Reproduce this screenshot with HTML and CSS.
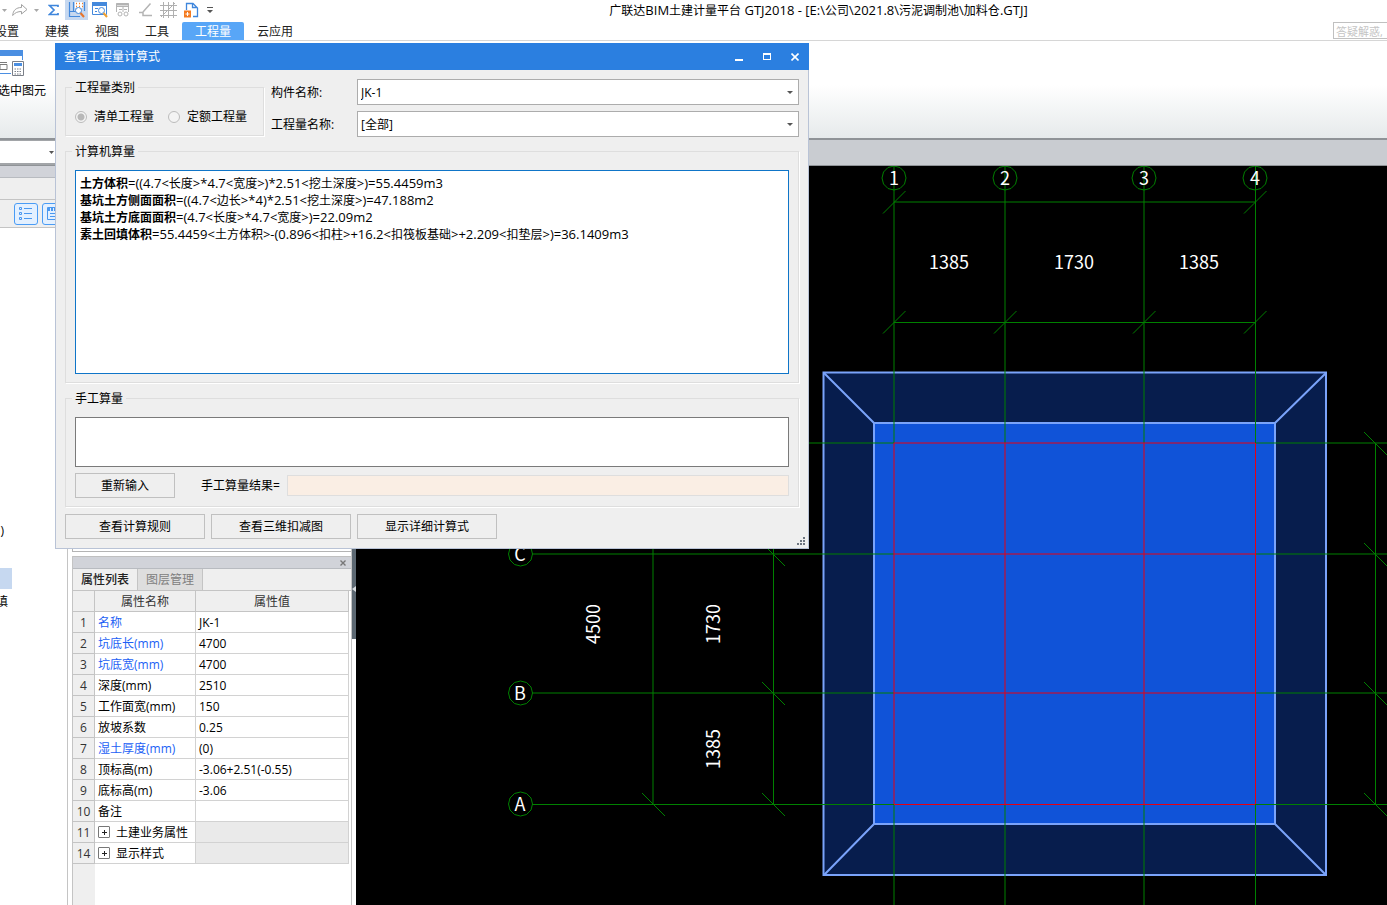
FILE: index.html
```html
<!DOCTYPE html>
<html lang="zh-CN">
<head>
<meta charset="utf-8">
<title>广联达BIM土建计量平台 GTJ2018</title>
<link rel="stylesheet" href="styles.css">
</head>
<body>
<div class="app">
  <header class="topbar">
    <div class="quick">
      <button class="q q-first" aria-label="撤销选项"><svg width="5" height="3"><path d="M0 0h5L2.5 3z" fill="#a8a8a8"/></svg></button>
      <button class="q" aria-label="恢复"><svg width="16" height="14" fill="none" stroke="#a2a2a2"><path d="M.7 12.5C1 7.500 4 4.500 9.500 4.500V1.500L15 6.500 9.500 11V8.500C6 8.500 3 9.500.7 12.500z"/></svg></button>
      <button class="q q-caret" aria-label="恢复选项"><svg width="5" height="3"><path d="M0 0h5L2.500 3z" fill="#a8a8a8"/></svg></button>
      <button class="q" aria-label="汇总计算"><svg width="12" height="12" fill="none" stroke="#3f86dc" stroke-width="1.700"><path d="M10 3V1.500H1.500L6 6 1.500 10.500H10V9"/></svg></button>
      <button class="q q-on" aria-label="查看计算式"><svg width="18" height="16" fill="none" stroke="#4489dc"><path d="M1.500 0v14.500H12M5.500 0v9.500H1.500M5.500 9.500h3M16.500 0v9" stroke-width="1.200"/><path d="M7 0h8v6H7z" fill="#fff" stroke="none"/><path d="M8 1.500h1M11 1.500h1M14 1.500h1M8 4.500h1M11 4.500h1M14 4.500h1" stroke="#f07c28" stroke-width="1.500"/><circle cx="10.500" cy="8.500" r="3" fill="#fff"/><path d="M12.500 11l3.500 4" stroke="#e8742a" stroke-width="2"/></svg></button>
      <button class="q" aria-label="查看工程量"><svg width="16" height="16" fill="none" stroke="#4489dc"><path d="M.5.500h14v12H.5z" fill="#fff"/><path d="M0 2h15" stroke-width="4"/><path d="M3 6.500h3M3 9.500h2"/><circle cx="9.500" cy="8.500" r="3" fill="#fff"/><path d="M11.500 11l3.500 4" stroke="#f0a030" stroke-width="2"/></svg></button>
      <button class="q" aria-label="查看报表"><svg width="16" height="16" fill="none" stroke="#b4b4b4"><path d="M1.500 10V1.500h12V10M1.500 4.500h12M8 5v5M9 7.500h3M4 7.500h3"/><path d="M1 2.500h13" stroke-width="2"/><circle cx="5" cy="12" r="2"/><circle cx="11" cy="12" r="2"/></svg></button>
      <button class="q" aria-label="编辑"><svg width="16" height="14" fill="none" stroke="#b4b4b4"><path d="M12.500.500L5 9M1 9.500h4v3H14" stroke-width="1.500"/></svg></button>
      <button class="q" aria-label="轴网"><svg width="17" height="16" fill="none" stroke="#b0b0b0"><path d="M0 3.500h17M0 8.500h17M0 13.500h17M3.500 0v16M8.500 0v16M13.500 0v16M1 15L15 1"/></svg></button>
      <button class="q" aria-label="导出"><svg width="15" height="16" fill="none" stroke="#3f86dc"><path d="M2.500 8V1.500H9L13.500 6v8.500H9M8.500 1.500v4H13" stroke-width="1.300"/><path d="M0 8.500h7v7H0z" fill="#f47b20" stroke="none"/><path d="M3.500 10v4M1.500 12h4" stroke="#fff"/></svg></button>
      <button class="q q-end" aria-label="自定义"><svg width="6" height="6"><path d="M0 0h6v1H0zM0 3h6L3 6z" fill="#555"/></svg></button>
    </div>
    <h1 class="title"><span>广联达</span>BIM<span>土建计量平台</span> GTJ2018 - [E:\<span>公司</span>\2021.8\<span>污泥调制池</span>\<span>加料仓</span>.GTJ]</h1>
  </header>
  <nav class="menubar">
    <div class="tabs">
      <a href="#">设置</a><a href="#">建模</a><a href="#">视图</a><a href="#">工具</a><a href="#" class="active">工程量</a><a href="#">云应用</a>
    </div>
    <input class="search" type="text" aria-label="搜索" placeholder="答疑解惑,">
  </nav>
  <section class="ribbon">
    <button class="ribbon-btn">
      <svg width="26" height="26" fill="none"><path d="M0 0h25v6H0z" fill="#4b8fe2"/><path d="M24.500 5v5M0 23.500h13" stroke="#4b8fe2"/><path d="M0 12.500h9M0 19.500h9M2 14.500h7v5H2z" stroke="#7a7a7a"/><path d="M14.500 11.500h11v14h-11z" fill="#fff" stroke="#7a7f88"/><path d="M16 13h8v3h-8z" fill="#4b8fe2"/><path d="M16.500 19h7M16.500 21.500h7M16.500 24h7" stroke="#7a7f88" stroke-dasharray="1.500 1"/></svg>
      <span>选中图元</span>
    </button>
  </section>
  <div class="strip"><button class="floor" aria-label="楼层"><svg width="5" height="3"><path d="M0 0h5L2.500 3z" fill="#555"/></svg></button></div>

  <main class="work">
    <aside class="side">
      <div class="band"></div>
      <div class="bar"></div>
      <div class="bar bar-tools">
        <button class="tool" aria-label="列表"><svg width="14" height="14" fill="none" stroke="#4a98f0"><path d="M.5.500h2v2h-2zM.5 5.500h2v2h-2zM.5 10.500h2v2h-2zM5 1.500h8M5 6.500h8M5 11.500h8"/></svg></button>
        <button class="tool" aria-label="详情"><svg width="14" height="14" fill="none" stroke="#4a98f0"><path d="M.5.500h13v12H.5zM3 6.500h8M3 9.500h8"/><path d="M1 2.500h12" stroke-width="3" stroke-dasharray="2 1"/></svg></button>
      </div>
      <div class="side-body">
        <ul class="tree">
          <li class="tail">)</li><li></li><li class="sel"></li><li>填</li>
        </ul>
        <div class="panels">
          <div class="list"></div>
          <section class="props">
            <div class="band band-close"><button class="x" aria-label="关闭"><svg width="6" height="6" stroke="#777" stroke-width="1.400"><path d="M.5.500l5 5M5.500.500l-5 5"/></svg></button></div>
            <div class="ptabs"><button class="on">属性列表</button><button>图层管理</button></div>
            <div class="sheet">
              <table>
                <colgroup><col class="c-num"><col class="c-name"><col></colgroup>
                <thead><tr><th></th><th>属性名称</th><th>属性值</th></tr></thead>
                <tbody>
                  <tr><th>1</th><td class="key">名称</td><td>JK-1</td></tr>
                  <tr><th>2</th><td class="key">坑底长(mm)</td><td>4700</td></tr>
                  <tr><th>3</th><td class="key">坑底宽(mm)</td><td>4700</td></tr>
                  <tr><th>4</th><td>深度(mm)</td><td>2510</td></tr>
                  <tr><th>5</th><td>工作面宽(mm)</td><td>150</td></tr>
                  <tr><th>6</th><td>放坡系数</td><td>0.25</td></tr>
                  <tr><th>7</th><td class="key">湿土厚度(mm)</td><td>(0)</td></tr>
                  <tr><th>8</th><td>顶标高(m)</td><td>-3.06+2.51(-0.55)</td></tr>
                  <tr><th>9</th><td>底标高(m)</td><td>-3.06</td></tr>
                  <tr><th>10</th><td>备注</td><td></td></tr>
                  <tr><th>11</th><td><span class="fold"><button class="plus" aria-label="展开"><svg width="5" height="5" stroke="#222"><path d="M0 2.500h5M2.500 0v5"/></svg></button>土建业务属性</span></td><td class="off"></td></tr>
                  <tr><th>14</th><td><span class="fold"><button class="plus" aria-label="展开"><svg width="5" height="5" stroke="#222"><path d="M0 2.500h5M2.500 0v5"/></svg></button>显示样式</span></td><td class="off"></td></tr>
                </tbody>
              </table>
            </div>
          </section>
        </div>
        <div class="splitter"><button class="grip" aria-label="折叠"><svg width="4" height="6"><path d="M4 0v6L0 3z" fill="#d8dce0"/></svg></button></div>
      </div>
    </aside>
    <section class="canvas">
      <svg class="drawing" width="100%" height="100%">
        <defs>
          <path id="bubble" d="M0-12L6-10.500 10.500-6 12 0 10.500 6 6 10.500 0 12-6 10.500-10.500 6-12 0-10.500-6-6-10.500z"/>
          <path id="up" d="M-11 11.500L11.500-11"/>
          <path id="dn" d="M-11-11L12 12"/>
        </defs>
        <g transform="translate(-356 -166)">
          <path d="M823.500 372.500h502.500v502.500H823.500z" fill="#071d4d" stroke="#7aa3fa" stroke-width="2"/>
          <path d="M874 423h401v401H874z" fill="#1053d8" stroke="#7aa3fa" stroke-width="2"/>
          <path d="M824 373l50 50M1326 373l-51 50M824 875l50-51M1326 875l-51-51" stroke="#7aa3fa" stroke-width="2"/>
          <g stroke="#008000" fill="none">
            <path d="M894 166v277M1005 166v277M1144 166v277M1255.500 166v277M894 804v110M1005 804v110M1144 804v110M1255.500 804v110"/>
            <path d="M532 443h362M532 554h362M532 693h362M532 804.500h362M1255 443h1400M1255 554h1400M1255 693h1400M1255 804.500h1400"/>
            <path d="M894 202h361M894 322.500h361M653 443v361M773.500 443v361M1375.500 443v361"/>
            <use href="#bubble" x="894" y="178"/><use href="#bubble" x="1005" y="178"/><use href="#bubble" x="1144" y="178"/><use href="#bubble" x="1255" y="178"/>
            <use href="#bubble" x="520.500" y="554"/><use href="#bubble" x="520.500" y="693"/><use href="#bubble" x="520.500" y="804"/>
            <use href="#up" x="894" y="202"/><use href="#up" x="1255" y="202"/>
            <use href="#up" x="894" y="322"/><use href="#up" x="1005" y="322"/><use href="#up" x="1144" y="322"/><use href="#up" x="1255" y="322"/>
            <use href="#dn" x="653" y="804"/><use href="#dn" x="773" y="804"/><use href="#dn" x="773" y="693"/><use href="#dn" x="773" y="554"/>
            <use href="#dn" x="1375" y="443"/><use href="#dn" x="1375" y="554"/><use href="#dn" x="1375" y="693"/><use href="#dn" x="1375" y="804"/>
          </g>
          <path d="M894 443v361M1005 443v361M1144 443v361M1255.500 443v361M894 443h361M894 554h361M894 693h361M894 804.500h361" stroke="#e80010"/>
          <g class="dims">
            <text x="894" y="185">1</text><text x="1005" y="185">2</text><text x="1144" y="185">3</text><text x="1255" y="185">4</text>
            <text x="520" y="561">C</text><text x="520" y="700">B</text><text x="520" y="811">A</text>
            <text x="949" y="269">1385</text><text x="1074" y="269">1730</text><text x="1199" y="269">1385</text>
            <text transform="translate(600 624) rotate(-90)">4500</text>
            <text transform="translate(720 624) rotate(-90)">1730</text>
            <text transform="translate(720 749) rotate(-90)">1385</text>
          </g>
        </g>
      </svg>
    </section>
  </main>
</div>

<div class="dialog" role="dialog" aria-labelledby="dlg-title">
  <div class="dlg-head">
    <h2 id="dlg-title">查看工程量计算式</h2>
    <button aria-label="最小化"><svg width="8" height="8"><path d="M0 6h8v2H0z" fill="#fff"/></svg></button>
    <button aria-label="最大化"><svg width="8" height="8"><path d="M0 0h8v7H0zM1 2v4h6V2z" fill="#fff" fill-rule="evenodd"/></svg></button>
    <button aria-label="关闭"><svg width="8" height="8" stroke="#fff" stroke-width="1.600"><path d="M.5.500l7 7M7.500.500l-7 7"/></svg></button>
  </div>
  <div class="dlg-body">
    <div class="query">
      <fieldset class="kind">
        <legend>工程量类别</legend>
        <label><input type="radio" name="kind" checked disabled>清单工程量</label>
        <label><input type="radio" name="kind" disabled>定额工程量</label>
      </fieldset>
      <div class="fields">
        <label for="comp">构件名称:</label>
        <span class="pick"><select id="comp"><option>JK-1</option></select></span>
        <label for="qty">工程量名称:</label>
        <span class="pick"><select id="qty"><option>[全部]</option></select></span>
      </div>
    </div>
    <fieldset>
      <legend>计算机算量</legend>
      <div class="formula" role="textbox" aria-label="计算机算量" aria-multiline="true" tabindex="0">
        <p><b>土方体积</b>=((4.7&lt;<var>长度</var>&gt;*4.7&lt;<var>宽度</var>&gt;)*2.51&lt;<var>挖土深度</var>&gt;)=55.4459m3</p>
        <p><b>基坑土方侧面面积</b>=((4.7&lt;<var>边长</var>&gt;*4)*2.51&lt;<var>挖土深度</var>&gt;)=47.188m2</p>
        <p><b>基坑土方底面面积</b>=(4.7&lt;<var>长度</var>&gt;*4.7&lt;<var>宽度</var>&gt;)=22.09m2</p>
        <p><b>素土回填体积</b>=55.4459&lt;<var>土方体积</var>&gt;-(0.896&lt;<var>扣柱</var>&gt;+16.2&lt;<var>扣筏板基础</var>&gt;+2.209&lt;<var>扣垫层</var>&gt;)=36.1409m3</p>
      </div>
    </fieldset>
    <fieldset>
      <legend>手工算量</legend>
      <textarea class="manual" aria-label="手工算量"></textarea>
      <div class="result">
        <button class="btn">重新输入</button>
        <label for="res">手工算量结果=</label>
        <input id="res" type="text" readonly>
      </div>
    </fieldset>
    <div class="actions">
      <button class="btn">查看计算规则</button>
      <button class="btn">查看三维扣减图</button>
      <button class="btn">显示详细计算式</button>
    </div>
  </div>
  <svg class="resize" width="8" height="8" fill="#6e7680"><path d="M6 0h2v2H6zM3 3h2v2H3zM6 3h2v2H6zM0 6h2v2H0zM3 6h2v2H3zM6 6h2v2H6z"/></svg>
</div>
</body>
</html>
```
FILE: styles.css
```css
* { box-sizing: border-box; }
body, h1, h2, p, ul { margin: 0; padding: 0; }
body, button, input, select, textarea {
  font-family: "Open Sans", "Noto Sans CJK SC", sans-serif;
  font-size: 12px;
  line-height: 16px;
  color: #000;
}
body { background: #fff; overflow: hidden; }
button { border: 0; padding: 0; background: none; }
svg { display: block; }
h1, h2 { font-size: 12px; font-weight: 400; }

.app { display: flex; flex-direction: column; height: 100vh; }
.topbar { display: flex; align-items: center; height: 20px; }
.quick { display: flex; height: 20px; }
.q { display: flex; align-items: center; justify-content: center; width: 23px; }
.q-first { width: 8px; }
.q-caret { width: 11px; }
.q-end { width: 13px; }
.q-on { background: #c6d8f0; }
.title { flex: 1; padding-left: 34px; font-size: 13px; text-align: center; line-height: 20px; white-space: nowrap; }
.title span { font-size: 12px; }

.menubar { display: flex; justify-content: space-between; height: 21px; border-bottom: 1px solid #d6d6d6; padding-top: 2px; }
.tabs { display: flex; margin-left: -18px; }
.tabs a { padding: 0 13px; line-height: 20px; height: 18px; color: #222; text-decoration: none; }
.tabs .active { background: #58a6f7; color: #fff; border-radius: 2px 2px 0 0; }
.search { width: 54px; height: 17px; padding: 1px 2px 0; border: 1px solid #c0c0c0; border-right: 0; font-size: 11px; }
.search::placeholder { color: #c4c4c4; }

.ribbon { height: 97px; padding-top: 9px; background: linear-gradient(#fff 45%, #e6eaeb); overflow: hidden; }
.ribbon-btn { display: flex; flex-direction: column; gap: 7px; margin-left: -2px; white-space: nowrap; }
.strip { display: flex; height: 28px; border-top: 2px solid #8f9397; border-bottom: 1px solid #8f9397; background: #c9ccd1; }
.floor { display: flex; align-items: center; justify-content: flex-end; width: 56px; padding-right: 2px; background: #fff; border: 1px solid #a2a5a8; border-width: 1px 0 2px; }

.work { display: flex; flex: 1; min-height: 0; }
.side { display: flex; flex-direction: column; width: 356px; background: #fff; }
.band { height: 12px; background: #d1d3d9; border-bottom: 1px solid #b8bbc0; }
.bar { height: 22px; background: #efefef; border-bottom: 1px solid #c4c4c4; }
.bar-tools { display: flex; gap: 4px; height: 28px; padding: 3px 0 0 14px; }
.tool { display: flex; align-items: center; justify-content: center; width: 24px; height: 22px; border: 1px solid #4a9cf5; border-radius: 3px; background: #e3f0ff; }
.side-body { display: flex; flex: 1; min-height: 0; }
.tree { width: 68px; padding-top: 291px; list-style: none; border-right: 1px solid #c4c4c4; }
.tree li { display: flex; justify-content: flex-end; align-items: center; width: 12px; height: 26px; padding-right: 4px; }
.tree .tail { height: 24px; padding-right: 8px; }
.tree li:nth-child(2) { height: 25px; }
.tree .sel { height: 21px; background: #c6d8f0; }
.panels { display: flex; flex-direction: column; flex: 1; padding-left: 4px; border-right: 1px solid #c4c4c4; }
.list { height: 324px; margin-bottom: 4px; border: 1px solid #b4b4b4; border-right: 0; }
.props { display: flex; flex-direction: column; flex: 1; min-height: 0; border-left: 1px solid #c4c4c4; }
.band-close { display: flex; align-items: center; justify-content: flex-end; height: 13px; padding-right: 5px; border-top: 1px solid #c0c0c0; }
.ptabs { display: flex; height: 22px; background: #efefef; border-bottom: 1px solid #c4c4c4; }
.ptabs button { width: 65px; color: #808080; background: #dedede; border-right: 1px solid #c4c4c4; }
.ptabs .on { color: #222; background: #efefef; font-weight: 500; }
.sheet { flex: 1; background: linear-gradient(90deg, #efefef 22px, #fff 22px); }
table { width: 276px; table-layout: fixed; border-collapse: separate; border-spacing: 0; }
.c-num { width: 22px; }
.c-name { width: 101px; }
th, td { height: 21px; padding: 2px 0 0; border-right: 1px solid #d2d2d2; border-bottom: 1px solid #d2d2d2; font-weight: 400; white-space: nowrap; }
th { background: #efefef; color: #333; text-align: center; border-color: #c4c4c4; }
td { padding-left: 3px; background: #fff; }
.key { color: #1c5ff5; }
.off { background: #eaeaea; }
.fold { display: flex; align-items: center; gap: 6px; }
.plus { display: flex; align-items: center; justify-content: center; width: 12px; height: 12px; margin-bottom: 2px; border: 1px solid #777; border-radius: 1px; }
.splitter { width: 4px; }
.grip { display: flex; align-items: center; width: 4px; height: 411px; padding-top: 310px; background: #5c6872; }

.canvas { flex: 1; min-width: 0; background: #000; overflow: hidden; }
.dims { font: 18px "Noto Sans CJK SC", sans-serif; fill: #fff; text-anchor: middle; }

.dialog { position: absolute; left: 55px; top: 43px; width: 754px; background: #efefef; border: 1px solid #b9c3d6; border-top: 0; }
.dlg-head { display: flex; align-items: center; height: 27px; margin: 0 -1px; padding: 0 4px 0 9px; background: #2b7fe0; }
.dlg-head h2 { flex: 1; color: #fff; }
.dlg-head button { display: flex; align-items: center; justify-content: center; width: 28px; height: 27px; }
.dlg-head button:last-child { width: 20px; margin-left: 4px; }
.dlg-body { display: flex; flex-direction: column; gap: 7px; padding: 9px; }
.query { display: flex; gap: 7px; height: 57px; }
fieldset { min-width: 0; margin: 0; padding: 11px 9px 8px; border: 1px solid #dedede; box-shadow: 1px 1px 0 #fff; }
legend { height: 16px; margin-left: -3px; padding: 0 3px; line-height: 18px; }
.kind { display: flex; gap: 14px; width: 199px; padding: 13px 9px 0; }
.kind label { display: flex; gap: 7px; height: 18px; align-items: center; white-space: nowrap; }
.kind input { appearance: none; width: 12px; height: 12px; margin: 0; border: 1px solid #bcbcbc; border-radius: 50%; background: #f4f4f4; }
.kind input:checked { background: radial-gradient(circle, #b8b8b8 3px, #f4f4f4 4px); }
.fields { display: grid; flex: 1; grid-template-columns: 86px 1fr; grid-auto-rows: 26px; row-gap: 6px; align-items: center; }
.fields label { padding-top: 2px; }
.pick { position: relative; display: block; }
.pick select { appearance: none; display: block; width: 100%; height: 26px; padding: 2px 3px 0; border: 1px solid #acacac; border-radius: 0; background: #fff; }
.pick::after { content: ""; position: absolute; right: 6px; top: 12px; border: 3px solid transparent; border-top-color: #555; border-bottom: 0; pointer-events: none; }
.formula { height: 204px; padding: 4px; border: 1px solid #0f75c8; background: #fff; font-size: 13px; line-height: 17px; overflow: auto; }
.formula p { height: 17px; }
.formula b, .formula var { font-size: 12px; font-style: normal; }
.manual { display: block; width: 100%; height: 50px; margin: 0; border: 1px solid #7a7a7a; background: #fff; resize: none; border-radius: 0; }
.result { display: flex; align-items: center; margin-top: 6px; }
.result .btn { width: 100px; margin-right: 26px; }
.result input { flex: 1; height: 21px; margin-left: 7px; border: 1px solid #dedede; background: #faeee4; }
.btn { width: 140px; height: 25px; border: 1px solid #c0c0c0; background: #efefef; }
.actions { display: flex; gap: 6px; }
.resize { position: absolute; right: 3px; bottom: 3px; }
```
